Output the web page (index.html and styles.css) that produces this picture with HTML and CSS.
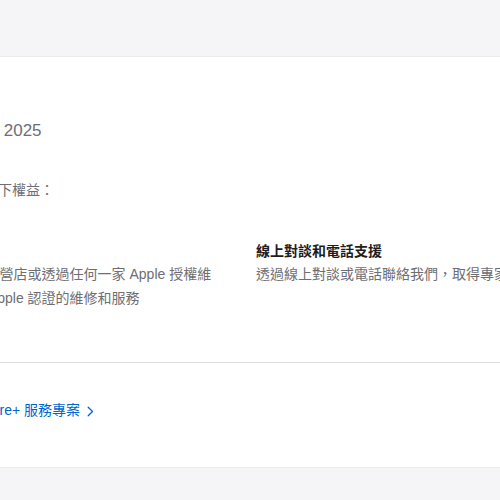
FILE: index.html
```html
<!DOCTYPE html>
<html lang="zh-Hant">
<head>
<meta charset="utf-8">
<title>AppleCare+</title>
<link rel="stylesheet" href="styles.css">
</head>
<body>
<div class="topbar"></div>
<main class="card">
  <section class="content">
    <p class="date">保障期限至 2025</p>
    <p class="intro">此方案包含以下權益：</p>
    <div class="benefits">
      <div class="benefit">
        <h3 class="benefit-title">維修服務</h3>
        <p class="benefit-text">前往 Apple 直營店或透過任何一家 Apple 授權維修商，取得 Apple 認證的維修和服務</p>
      </div>
      <div class="benefit">
        <h3 class="benefit-title">線上對談和電話支援</h3>
        <p class="benefit-text">透過線上對談或電話聯絡我們，取得專家協助。</p>
      </div>
    </div>
  </section>
  <hr class="divider">
  <section class="content footer-link">
    <a class="more" href="#">更多 AppleCare+ 服務專案<svg class="chev" width="7" height="11" viewBox="0 0 7 11"><path d="M1.2 1.2 L5.5 5.5 L1.2 9.8" fill="none" stroke="currentColor" stroke-width="1.3" stroke-linecap="round" stroke-linejoin="round"/></svg></a>
  </section>
</main>
<div class="bottombar"></div>
</body>
</html>
```

FILE: styles.css
```css
html, body {
  margin: 0;
  padding: 0;
  background: #f5f5f7;
  overflow: hidden;
  width: 500px;
  height: 500px;
}
body {
  font-family: "Liberation Sans", "Noto Sans CJK TC", sans-serif;
  color: #1d1d1f;
}
.topbar {
  height: 56px;
  background: #f5f5f7;
  border-bottom: 1px solid #ececef;
}
.card {
  background: #ffffff;
  height: 411px;
  border-bottom: 1px solid #ececef;
  box-sizing: border-box;
  padding-top: 62px;
}
.content {
  margin-left: -86px;
  width: 700px;
}
.date {
  margin: 0;
  font-size: 17px;
  line-height: 24px;
  color: #6e6e73;
}
.intro {
  margin: 35px 0 0;
  font-size: 14px;
  line-height: 24px;
  color: #6e6e73;
}
.benefits {
  display: grid;
  grid-template-columns: 306px 306px;
  column-gap: 36px;
  margin-top: 38px;
}
.benefit-title {
  margin: 0;
  font-size: 14px;
  line-height: 22px;
  font-weight: 600;
  color: #1d1d1f;
}
.benefit-text {
  margin: 0;
  font-size: 14px;
  line-height: 24px;
  color: #6e6e73;
}
.divider {
  margin: 52px 0 0;
  border: 0;
  border-top: 1px solid #d9d9de;
  height: 0;
}
.footer-link {
  padding-top: 35px;
}
.more {
  display: inline-flex;
  align-items: center;
  gap: 7px;
  font-size: 14px;
  line-height: 24px;
  color: #0066cc;
  text-decoration: none;
}
.chev {
  color: #0066cc;
  margin-top: 2px;
}
.bottombar {
  height: 40px;
}
```
